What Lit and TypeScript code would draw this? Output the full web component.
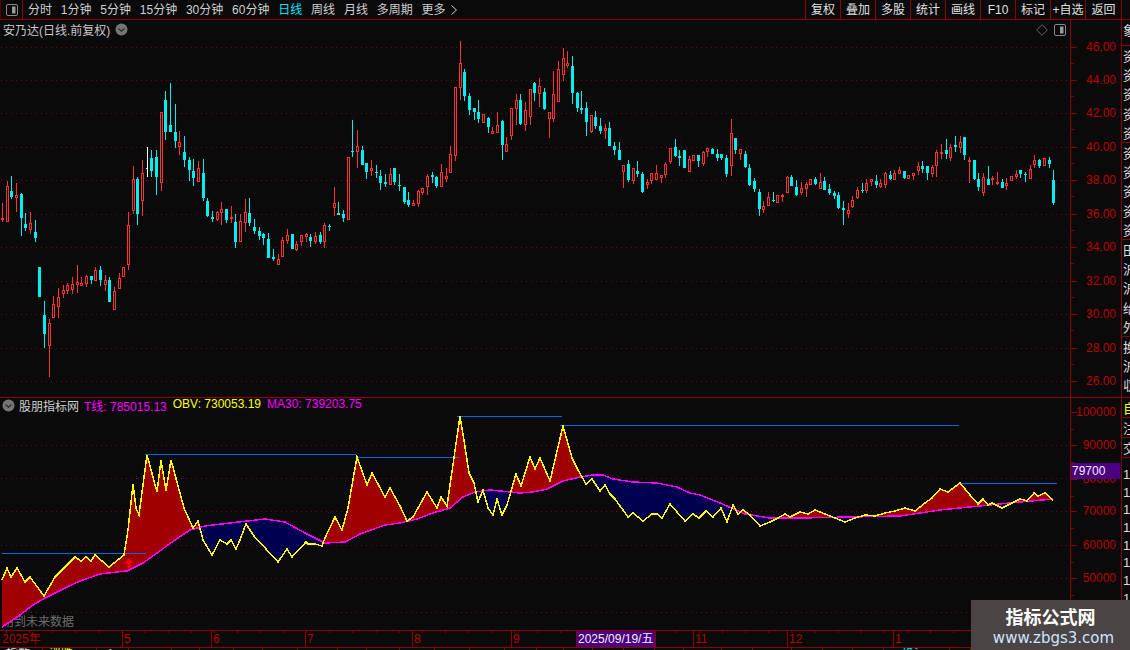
import { LitElement, html, css, svg } from "lit";
import { customElement } from "lit/decorators.js";

const SEGMENTS: [number, number, string][] = [
  [0, 130, "r 7.5 220 265 270 275|r 22 153 168 275 275|c 34 138 183 202 207|r 49 160 196 204 246|c 64 190 192 264 318|c 76 250 282 294 303|r 91 247 280 300 312|c 106 270 306 324 336|c 118 411 411 501 501|c 133 514 555 612 654|r 148 568 580 648 741|r 160 499 523 564 564|r 175 475 502 530 564|r 190 465 481 492 504|r 202 460 466 484 492|r 217 442 463 480 492|r 232 405 457 465 489|r 244 442 460 468 468|r 259 435 438 462 471|c 274 438 438 450 462|r 286 411 421 453 453|c 301 408 420 450 468|r 316 435 451 465 483|c 328 442 450 516 516|r 343 472 484 540 540|r 358 430 445 477 477|r 370 412 412 441 441|r 385 247 286 404 420|r 400 108 148 243 252|c 412 141 148 252 285|r 427 91 130 212 258|w 442 52 114 117 141|c 454 60 84 123 141|c 469 60 81 141 195|r 484 -54 -54 159 183|c 496 -117 -90 6 30|c 511 -141 -15 6 6|c 526 -78 6 33 54|r 538 3 37 50 75|c 553 18 66 90 111|c 568 82 90 120 153|c 580 87 123 144 168|r 595 94 115 156 156|c 610 87 129 204 213|c 622 205 213 258 261|c 637 243 261 267 276|r 652 243 247 270 273|r 664 216 238 249 285|c 679 237 237 270 279|r 694 228 262 264 279|c 706 252 276 336 354|r 721 252 274 335 336|r 736 208 247 279 306|c 748 205 250 279 288|c 763 267 291 303 312|c 778 291 303 318 330"],
  [250, 115, "c 40 354 357 369 390|c 55 354 372 429 429|c 70 402 426 432 438|r 85 417 432 450 450|r 97 366 375 426 426|r 112 342 360 378 387|c 127 357 357 402 402|r 139 378 387 405 408|r 154 360 360 381 393|r 169 354 357 366 381|c 181 357 366 378 396|r 196 351 363 381 387|c 211 351 360 381 387|r 223 324 330 381 399|c 238 327 333 336 348|r 253 216 264 278 303|c 265 261 294 300 300|c 280 285 297 309 321|r 295 126 126 315 315|c 307 15 107 110 126|r 322 45 93 110 159|c 337 93 105 150 150|c 349 144 144 171 192|r 364 135 159 167 183|c 379 150 171 174 189|c 391 165 183 204 225|c 406 177 201 207 216|r 421 159 177 210 210|c 433 159 159 201 210|c 448 177 209 213 228|c 463 216 216 261 267|c 475 231 255 270 276|r 490 255 264 273 273|r 505 225 228 267 276"],
  [400, 30, "r 68 474 474 489 495|r 82 432 438 471 495|c 97 426 435 441 459|c 109 438 441 468 474|r 124 402 427 471 471|r 139 414 438 446 456|r 151 348 373 429 429|r 166 172 172 378 393|r 181 33 99 174 210|c 193 117 126 198 213|c 208 189 198 240 255|c 223 234 234 246 270|c 235 210 246 267 279|r 250 252 252 279 279|c 265 261 264 291 309|r 277 291 303 312 312|r 292 246 286 309 309|c 307 270 273 345 390|r 319 321 343 366 366|r 334 235 235 318 330|r 349 192 210 237 285|c 361 192 210 282 285|r 376 216 240 285 303|r 391 178 178 261 285|c 403 156 159 189 213|r 418 144 168 192 231|c 433 174 186 237 240|r 448 247 247 267 324|r 460 123 192 267 276|r 475 93 117 216 216|r 490 54 84 135 153|r 502 63 99 108 114|c 517 78 108 189 222|c 532 186 189 234 246|c 544 183 234 240 252|c 559 216 234 276 318|r 574 255 255 306 309|c 586 243 261 288 297|c 601 264 288 303 312|r 616 282 294 303 327|c 628 276 294 348 348|c 643 336 348 360 375|c 658 336 360 390 390|r 670 405 405 426 474|c 685 390 402 450 456|r 700 414 414 453 462|c 712 393 423 432 441|c 727 426 432 486 489|r 742 447 456 465 477|r 754 429 429 453 462|r 769 405 429 450 450"],
  [650, 115, "r 34 180 180 189 204|r 46 141 147 180 189|r 61 99 99 141 147|c 76 72 96 123 126|c 88 105 123 129 153|c 103 105 105 159 159|r 118 123 132 171 171|r 130 120 120 138 138|c 145 120 120 138 156|r 160 108 111 147 153|r 172 99 99 111 126|c 187 99 102 117 117|c 202 102 117 130 138|c 214 117 117 129 135|c 229 120 129 177 186|r 244 12 54 153 183|c 256 69 69 105 117|r 271 102 102 117 135|c 286 108 117 156 159|c 298 147 159 210 213|c 313 189 198 222 231|c 328 222 231 282 303|r 340 258 273 285 294|r 355 231 246 273 273|c 370 231 255 259 262|r 382 240 240 264 264|r 397 238 239 242 261|r 412 183 186 234 234|c 424 180 186 213 213|c 439 195 216 240 243|r 454 201 219 234 240|r 469 201 207 222 246|r 481 192 192 210 210|c 496 186 192 207 210|r 511 174 201 222 222|c 523 186 198 225 225|c 538 207 222 234 240|c 553 228 234 243 252|c 565 231 240 279 282|c 580 258 279 285 330|r 595 264 285 297 309|r 607 243 255 276 279|r 622 216 225 249 252|c 637 204 225 228 234|r 649 192 204 228 234|r 664 192 192 201 213|c 679 180 198 210 219|r 691 192 204 216 219|r 706 171 174 210 219|c 721 168 180 192 195|r 733 165 174 195 195|r 748 156 165 177 177|c 763 168 168 189 192|r 775 180 180 192 192|r 790 174 174 183 195|r 805 141 153 168 180|c 817 138 153 162 174|c 832 153 153 174 195|r 847 150 156 177 186|r 859 105 111 153 186|r 874 87 111 114 132|c 889 72 105 117 132|r 901 87 96 129 138|c 916 63 90 96 111|r 931 63 81 99 114|c 943 66 66 120 135|r 958 126 135 141 204|c 973 135 135 192 195|c 985 174 192 216 228|r 1000 174 186 234 243|c 1015 153 192 210 210|r 1027 183 189 192 210|r 1042 171 201 207 210|c 1057 192 201 219 219|r 1069 189 204 213 225|r 1084 183 183 198 198|r 1099 165 177 186 192|c 1111 165 165 177 189|c 1126 171 177 179 201|r 1141 150 162 192 192|r 1153 120 135 150 159|c 1168 132 135 153 159|r 1183 129 129 153 153|c 1198 126 135 147 159|c 1210 165 195 264 270"],
];

let cyan = "", white = "", redWick = "", redBody = "", cyanWick = "";
for (const [ox, oy, data] of SEGMENTS) {
  for (const item of data.split("|")) {
    const [k, ...n] = item.split(" ");
    const [zx, zh, zt, zb, zl] = n.map(Number);
    const X = Math.floor(ox + zx / 3);
    const h = Math.round(oy + zh / 3), t = Math.round(oy + zt / 3);
    const b = Math.max(t + 1, Math.round(oy + zb / 3)), l = Math.round(oy + zl / 3);
    if (k === "r") {
      const B = Math.max(b, t + 2);
      redBody += `M${X - 0.5} ${t + 0.5}h2v${B - t - 1}h-2z`;
      if (h < t) redWick += `M${X} ${h}h1v${t - h}h-1z`;
      if (l > B) redWick += `M${X} ${B}h1v${l - B}h-1z`;
    } else if (k === "c") {
      cyan += `M${X - 1} ${t}h3v${b - t}h-3z`;
      cyanWick += `M${X} ${h}h1v${l - h}h-1z`;
    } else {
      white += `M${X} ${h}h1v${l - h}h-1zM${X - 1} ${t}h1v1h-1z`;
    }
  }
}

const T: number[][] = [[2,580],[7,568],[11,577],[17,568],[25,582],[30,577],[44,596],[55,577],[75,557],[81,561],[86,557],[91,561],[95,555],[109,567],[124,555],[128,530],[133,484],[136,508],[139,515],[147,455],[157,492],[161,460],[166,491],[171,460],[184,508],[193,528],[198,521],[203,540],[212,555],[220,540],[227,544],[231,540],[236,549],[240,540],[246,524],[254,536],[278,562],[287,549],[292,557],[306,542],[308,544],[315,544],[322,546],[325,538],[335,517],[342,530],[348,508],[357,457],[367,485],[372,473],[385,497],[390,488],[400,506],[407,521],[413,517],[427,492],[437,508],[441,497],[447,506],[460,416],[465,447],[469,473],[474,483],[478,502],[483,490],[488,508],[493,515],[497,499],[502,515],[507,505],[516,474],[521,486],[530,457],[535,469],[540,458],[550,481],[563,426],[572,458],[578,470],[586,484],[592,479],[600,491],[605,485],[610,494],[615,499],[628,517],[633,513],[643,521],[652,514],[657,514],[662,518],[670,504],[685,521],[693,514],[699,518],[706,511],[713,517],[721,508],[727,522],[733,505],[738,514],[743,510],[750,515],[760,526],[770,522],[778,518],[785,514],[790,517],[800,512],[808,514],[815,510],[825,514],[835,518],[845,522],[855,518],[865,515],[875,516],[885,513],[895,511],[905,508],[915,511],[925,503],[932,498],[940,489],[948,492],[960,483],[970,495],[978,504],[983,499],[988,505],[992,503],[1002,508],[1010,504],[1020,499],[1027,501],[1034,493],[1038,496],[1045,493],[1053,500]];
const M: number[][] = [[2,627],[20,615],[33,605],[45,598],[67,587],[80,581],[100,574],[117,572],[127,571],[143,563],[157,553],[175,540],[190,530],[205,526],[230,523],[265,519],[285,522],[305,533],[325,543],[345,542],[360,534],[385,525],[400,523],[417,519],[433,513],[450,508],[463,497],[475,492],[490,490],[500,491],[520,493],[533,492],[547,489],[563,481],[580,477],[593,475],[603,475],[613,479],[633,482],[657,483],[677,487],[690,493],[700,495],[720,503],[745,514],[770,518],[800,518],[850,517],[900,516],[940,510],[960,508],[980,506],[1010,503],[1053,499]];

const at = (p: number[][], x: number) => {
  for (let i = 1; i < p.length; i++) {
    if (x <= p[i][0]) {
      const [a, b] = [p[i - 1], p[i]];
      return a[1] + ((b[1] - a[1]) * (x - a[0])) / (b[0] - a[0]);
    }
  }
  return p[p.length - 1][1];
};
let fillRed = "", fillBlue = "";
for (let x = 2; x <= 1053; x++) {
  const a = Math.round(at(T, x)), b = Math.round(at(M, x));
  if (a < b) fillRed += `M${x} ${a}h1v${b - a}h-1z`;
  else if (b < a) fillBlue += `M${x} ${b}h1v${a - b}h-1z`;
}
const pts = (p: number[][]) => p.map((q) => q.join(",")).join(" ");

const BLUE = [[2,553,146],[145,454,356],[356,457,459],[457,416,562],[560,425,959],[960,483,1057]];
const PRICES = [[46,47],[44,80],[42,113],[40,147],[38,180],[36,214],[34,247],[32,281],[30,314],[28,348],[26,381]];
const VOLS = [["100000",412],["90000",445],["80000",479],["70000",511],["60000",545],["50000",578],["",612]] as [string,number][];
const MONTHS: [string, number][] = [["5",122],["6",211],["7",305],["8",412],["9",511],["11",693],["12",787],["1",893]];
const TABS = ["分时","1分钟","5分钟","15分钟","30分钟","60分钟","日线","周线","月线","多周期"];
const BTNS = ["复权","叠加","多股","统计","画线","F10","标记","+自选","返回"];
const STATUS = [43,54,32,43,28,34,29,35,40,29,33,35,35,35,32,27,29,31,31,29,38,31,39,31,30,31,34,32,21];
const STATUS_TEXT: Record<number, string> = { 0: "指数", 1: "涨跌", 2: "1", 26: "换手" };
const S1 = ["象","资","资","资","资","资","资","资","资","资","资","田","沪","沪","给","外","换","沪","収"];

const toggle = html`<svg class="tog" width="12" height="12" viewBox="0 0 12 12"><rect x=".5" y=".5" width="11" height="11" rx="1.5" class="togline"/><rect x="6" y="2.5" width="3.5" height="7" class="togfill"/></svg>`;
const chev = html`<svg width="13" height="13" viewBox="0 0 13 13"><circle cx="6.5" cy="6.5" r="6" class="chevc"/><path d="M3.5 5.5l3 2.6 3-2.6" class="chevp"/></svg>`;

@customElement("app-root")
export class AppRoot extends LitElement {
  static styles = css`
    :host { display: block; width: 1130px; height: 650px; overflow: hidden; background: #0a0a0a; position: relative;
      font: 12px "Liberation Sans", "Noto Sans CJK SC", sans-serif; color: #cfcfcf; }
    .top { display: flex; height: 19px; border-bottom: 1px solid #8c0000; }
    .tog-box { width: 23px; box-sizing: border-box; border-right: 1px solid #8c0000; border-left: 1px solid #5a0000; display: flex; align-items: center; justify-content: center; }
    .tabs { display: flex; gap: 8.8px; padding: 1px 0 0 5px; align-items: center; flex: 1; line-height: 18px; white-space: nowrap; }
    .tabs .on { color: #00e6ff; }
    .more { display: flex; align-items: center; gap: 5px; }
    .morec { fill: none; stroke: #cfcfcf; stroke-width: 1; }
    .btns { display: flex; height: 19px; margin-right: 8px; }
    .btns div { width: 34px; padding-top: 1px; box-sizing: content-box; height: 18px; border-left: 1px solid #8c0000; text-align: center; line-height: 18px; color: #e0e0e0; white-space: nowrap; overflow: hidden; }
    .btns div:last-child { width: 35px; border-right: 1px solid #8c0000; }
    .body { display: grid; grid-template-columns: 1121px 8px; column-gap: 0; height: 630px; }
    .main { display: flex; flex-direction: column; }
    .pane { position: relative; display: block; }
    .pane svg.cv { display: block; }
    .hline { height: 1px; background: #8c0000; }
    .legend { position: absolute; display: flex; align-items: center; white-space: nowrap; }
    .title { left: 3px; top: 0; gap: 5px; height: 18px; color: #c8c8c8; }
    .sub { left: 2px; top: 0; height: 15px; gap: 4px; }
    .sub .vals { display: flex; gap: 6px; margin-left: 1px; }
    .m { color: #ff00ff; }
    .y { color: #ffff00; }
    .tr { position: absolute; right: 55px; top: 4px; display: flex; gap: 6px; align-items: center; }
    .togline { fill: none; stroke: #8a8a8a; }
    .togfill { fill: #9a9a9a; }
    .chevc { fill: #757575; }
    .chevp { fill: none; stroke: #2a2a2a; stroke-width: 1.2; }
    .dia { fill: none; stroke: #666; }
    .grid { stroke: #6e1010; stroke-width: 1; stroke-dasharray: 1 4; }
    .ax { fill: #8c0000; }
    .lab { fill: #bb0000; font: 12px "Liberation Sans", "Noto Sans CJK SC", sans-serif; }
    .end { text-anchor: end; }
    .cy { fill: #00f0f0; }
    .wh { fill: #fff; }
    .rw { fill: #ff3232; }
    .rb { fill: #0a0a0a; stroke: #ff3232; stroke-width: 1; }
    .fr { fill: #a00000; }
    .fb { fill: #000050; }
    .ty { fill: none; stroke: #ffff00; stroke-width: 1.5; }
    .tm { fill: none; stroke: #ff00ff; stroke-width: 1.5; }
    .bl { stroke: #0066ee; stroke-width: 1; }
    .ghost { fill: #6e6e6e; font: 12px "Noto Sans CJK SC", sans-serif; }
    .arrow { fill: #ff0000; }
    .dash { fill: #000; }
    .box { fill: #4b0082; }
    .boxt { fill: #f0f0f0; font: 12px "Liberation Sans", "Noto Sans CJK SC", sans-serif; }
    .status { display: flex; height: 3px; overflow: hidden; border-top: 1px solid #8c0000; margin-top: 0; }
    .status div { border-right: 1px solid #8c0000; box-sizing: border-box; line-height: 12px; padding-left: 6px; color: #ddd; flex: none; white-space: nowrap; }
    .status div:nth-child(2) { color: #ffff00; }
    .status div:nth-child(3) { padding-left: 10px; }
    .status div:nth-child(27) { color: #00e6ff; padding-left: 18px; overflow: hidden; }
    .side { border-left: 1px solid #8c0000; width: 9px; display: flex; flex-direction: column; overflow: hidden; font: 13px "Noto Sans CJK SC", sans-serif; color: #ddd; }
    .sec { border-bottom: 1px solid #8c0000; box-sizing: border-box; flex: none; overflow: hidden; }
    .sec div { height: 19.2px; line-height: 19.2px; white-space: nowrap; padding-left: 1px; }
    .sec.low div { height: 19.6px; line-height: 19.6px; }
    .sec.ones div { height: 17.7px; line-height: 17.7px; font: 13px "Liberation Sans", sans-serif; padding-top: 0; }
    .h25 { height: 26px; } .h97 { height: 97px; } .h61 { height: 61px; }
    .h20 { height: 20px; } .none { border-bottom: none; padding-top: 9px; }
    .yel { color: #ffff00; }
    .wm { position: absolute; left: 971px; top: 600px; width: 159px; height: 50px; background: #4a4444; display: flex; flex-direction: column; align-items: center; justify-content: center; }
    .wm b { font: bold 18px "Noto Sans CJK SC", sans-serif; color: #fff; line-height: 26px; }
    .wm span { font: 15px "DejaVu Sans", sans-serif; color: #cfe4ff; line-height: 19px; margin-left: 6px; }
  `;

  render() {
    return html`
      <div class="top">
        <div class="tog-box">${toggle}</div>
        <div class="tabs">
          ${TABS.map((t) => html`<span class=${t === "日线" ? "on" : ""}>${t}</span>`)}
          <span class="more">更多<svg width="6" height="10" viewBox="0 0 6 10"><path class="morec" d="M.5 .5L5.5 5 .5 9.5"/></svg></span>
        </div>
        <div class="btns">${BTNS.map((b) => html`<div>${b}</div>`)}</div>
      </div>
      <div class="body">
        <div class="main">
          <div class="pane">
            <svg class="cv" width="1121" height="377" viewBox="0 20 1121 377">
              ${PRICES.map(([, y]) => svg`<line class="grid" x1="1" x2="1070" y1=${y + 0.5} y2=${y + 0.5}/>`)}
              <rect class="ax" x="1070" y="20" width="1" height="377"/>
              ${PRICES.map(([p, y]) => svg`
                <rect class="ax" x="1071" y=${y} width="6" height="1"/>
                <rect class="ax" x="1071" y=${y + 16} width="3" height="1"/>
                <text class="lab end" x="1116" y=${y + 4}>${p}.00</text>`)}
              <path class="rw" d=${redWick}/>
              <path class="rb" d=${redBody} shape-rendering="crispEdges"/>
              <path class="cy" d=${cyanWick + cyan}/>
              <path class="wh" d=${white}/>
            </svg>
            <div class="legend title">安乃达(日线.前复权) ${chev}</div>
            <div class="tr">
              <svg width="12" height="12" viewBox="0 0 12 12"><path class="dia" d="M6 .7L11.3 6 6 11.3.7 6z"/></svg>
              ${toggle}
            </div>
          </div>
          <div class="hline"></div>
          <div class="pane">
            <svg class="cv" width="1121" height="232" viewBox="0 398 1121 232">
              ${[445,478,511,545,578,612].map((y) => svg`<line class="grid" x1="1" x2="1070" y1=${y + 0.5} y2=${y + 0.5}/>`)}
              <rect class="ax" x="1070" y="398" width="1" height="232"/>
              ${VOLS.map(([, y]) => svg`
                <rect class="ax" x="1071" y=${y} width="6" height="1"/>
                <rect class="ax" x="1071" y=${y + 17} width="3" height="1"/>`)}
              ${VOLS.map(([v, y]) => svg`<text class="lab end" x="1116" y=${y + 4}>${v}</text>`)}
              <text class="ghost" x="2" y="626">用到未来数据</text>
              <path class="fr" d=${fillRed}/>
              <path class="fb" d=${fillBlue}/>
              ${BLUE.map(([a, y, b]) => svg`<line class="bl" x1=${a} x2=${b} y1=${y + 0.5} y2=${y + 0.5}/>`)}
              <polyline class="tm" points=${pts(M)} shape-rendering="crispEdges"/>
              <polyline class="ty" points=${pts(T)} shape-rendering="crispEdges"/>
              <path class="dash" d="M125 556h2v1h-2zM131 556h2v1h-2z"/>
              <path class="arrow" d="M129 558l4.5 5h-3v5h-3v-5h-3z"/>
              <rect class="box" x="1071" y="463" width="49" height="16"/>
              <text class="boxt" x="1072" y="475">79700</text>
            </svg>
            <div class="legend sub">
              ${chev}
              <span>股朋指标网</span>
              <span class="vals">
                <span class="m">T线: 785015.13</span>
                <span class="y">OBV: 730053.19</span>
                <span class="m">MA30: 739203.75</span>
              </span>
            </div>
          </div>
          <div class="hline"></div>
          <div class="pane">
            <svg class="cv" width="1121" height="16" viewBox="0 631 1121 16">
              ${Array.from({ length: 46 }, (_, i) => svg`<rect class="ax" x=${6 + i * 23.1} y="631" width="1" height="2"/>`)}
              <text class="lab" x="2" y="643">2025年</text>
              ${MONTHS.map(([m, x]) => svg`
                <rect class="ax" x=${x} y="631" width="1" height="16"/>
                <text class="lab" x=${x + 2} y="643">${m}</text>`)}
              <rect class="box" x="577" y="631" width="78" height="16"/>
              <rect class="ax" x="576" y="631" width="1" height="16"/>
              <rect class="ax" x="655" y="631" width="1" height="16"/>
              <text class="boxt" x="578" y="643">2025/09/19/五</text>
              <rect class="ax" x="1070" y="631" width="1" height="16"/>
            </svg>
          </div>
          <div class="status">${STATUS.map((w, i) => html`<div style="width:${w}px">${STATUS_TEXT[i] ?? ""}</div>`)}</div>
        </div>
        <div class="side">
          <div class="sec h25"><div>${S1[0]}</div></div>
          <div class="sec h97">${S1.slice(1, 6).map((c) => html`<div>${c}</div>`)}</div>
          <div class="sec h97">${S1.slice(6, 11).map((c) => html`<div>${c}</div>`)}</div>
          <div class="sec h97">${S1.slice(11, 16).map((c) => html`<div>${c}</div>`)}</div>
          <div class="sec h61">${S1.slice(16).map((c) => html`<div>${c}</div>`)}</div>
          <div class="sec low h20"><div class="yel">自</div></div>
          <div class="sec low h20"><div>注</div></div>
          <div class="sec low h20"><div>交</div></div>
          <div class="sec ones none">${[1,2,3,4,5,6,7,8].map(() => html`<div>1</div>`)}</div>
        </div>
      </div>
      <div class="wm"><b>指标公式网</b><span>www.zbgs3.com</span></div>
    `;
  }
}
